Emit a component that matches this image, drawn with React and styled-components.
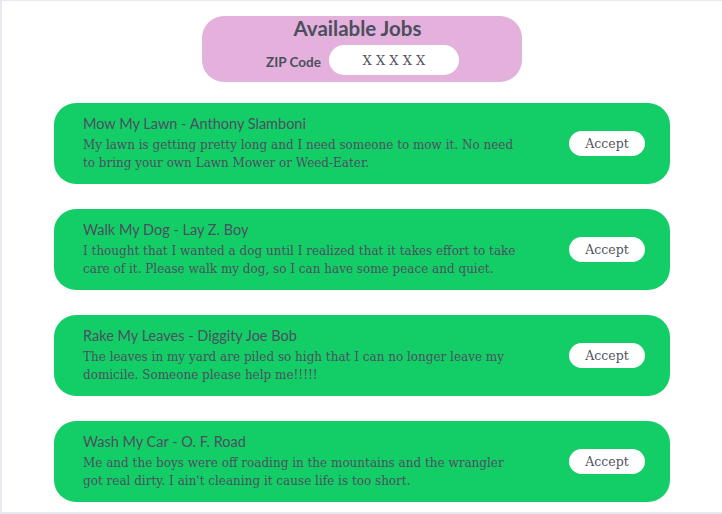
import React from 'react';
import styled, { createGlobalStyle } from 'styled-components';

const GlobalStyle = createGlobalStyle`
  html, body {
    margin: 0;
    padding: 0;
    background: #ffffff;
  }
  body {
    font-family: Lato, "Liberation Sans", sans-serif;
  }
`;

const jobs = [
  {
    title: 'Mow My Lawn - Anthony Slamboni',
    text: 'My lawn is getting pretty long and I need someone to mow it. No need to bring your own Lawn Mower or Weed-Eater.',
  },
  {
    title: 'Walk My Dog - Lay Z. Boy',
    text: 'I thought that I wanted a dog until I realized that it takes effort to take care of it. Please walk my dog, so I can have some peace and quiet.',
  },
  {
    title: 'Rake My Leaves - Diggity Joe Bob',
    text: 'The leaves in my yard are piled so high that I can no longer leave my domicile. Someone please help me!!!!!',
  },
  {
    title: 'Wash My Car - O. F. Road',
    text: "Me and the boys were off roading in the mountains and the wrangler got real dirty. I ain't cleaning it cause life is too short.",
  },
];

const Page = () => (
  <>
    <GlobalStyle />
    <Frame>
      <Header>
        <Heading>Available Jobs</Heading>
        <ZipRow>
          <ZipLabel htmlFor="zip">ZIP Code</ZipLabel>
          <ZipInput id="zip" placeholder="X X X X X" />
        </ZipRow>
      </Header>
      <JobList>
        {jobs.map((job) => (
          <JobCard key={job.title}>
            <JobInfo>
              <JobTitle>{job.title}</JobTitle>
              <JobText>{job.text}</JobText>
            </JobInfo>
            <AcceptButton>Accept</AcceptButton>
          </JobCard>
        ))}
      </JobList>
    </Frame>
  </>
);

const Frame = styled.div`
  box-sizing: border-box;
  height: 514px;
  border-left: 2px solid #e6e9ef;
  border-top: 1px solid #e6e9ef;
  border-bottom: 2px solid #e6e9ef;
  display: flex;
  flex-direction: column;
  align-items: center;
  padding-top: 15px;
  overflow: hidden;
`;

const Header = styled.div`
  box-sizing: border-box;
  width: 320px;
  height: 66px;
  background: #e4b0dc;
  border-radius: 22px;
  display: flex;
  flex-direction: column;
  align-items: center;
`;

const Heading = styled.h1`
  margin: -1px 0 0 -9px;
  font-family: Lato, sans-serif;
  font-weight: 700;
  font-size: 20.5px;
  line-height: 26px;
  color: #4b4f5d;
`;

const ZipRow = styled.div`
  display: flex;
  align-items: center;
  gap: 8px;
  margin-top: 4px;
  padding-left: 1px;
`;

const ZipLabel = styled.label`
  font-family: Lato, sans-serif;
  font-weight: 700;
  font-size: 13.5px;
  color: #4b4f5d;
  padding-top: 3px;
`;

const ZipInput = styled.input`
  box-sizing: border-box;
  width: 130px;
  height: 30px;
  border: none;
  outline: none;
  border-radius: 15px;
  background: #ffffff;
  text-align: center;
  font-family: "DejaVu Serif", serif;
  font-size: 13px;
  &::placeholder {
    color: #55585f;
    opacity: 1;
  }
`;

const JobList = styled.div`
  display: flex;
  flex-direction: column;
  gap: 25px;
  margin-top: 21px;
`;

const JobCard = styled.div`
  box-sizing: border-box;
  width: 616px;
  height: 81px;
  background: #13ce66;
  border-radius: 22px;
  display: flex;
  align-items: center;
  justify-content: space-between;
  padding: 0 25px 0 29px;
`;

const JobInfo = styled.div`
  display: flex;
  flex-direction: column;
  width: 436px;
  margin-top: -2px;
`;

const JobTitle = styled.div`
  font-family: Lato, sans-serif;
  font-size: 14.5px;
  line-height: 20px;
  color: #4b5060;
`;

const JobText = styled.div`
  margin-top: 2px;
  font-family: "DejaVu Serif", serif;
  font-size: 12px;
  line-height: 18px;
  color: #4b5060;
`;

const AcceptButton = styled.button`
  box-sizing: border-box;
  width: 76px;
  height: 25px;
  border: none;
  border-radius: 13px;
  background: #ffffff;
  font-family: "DejaVu Serif", serif;
  font-size: 12.5px;
  color: #4f535e;
  padding: 0;
  cursor: pointer;
`;

export default Page;
